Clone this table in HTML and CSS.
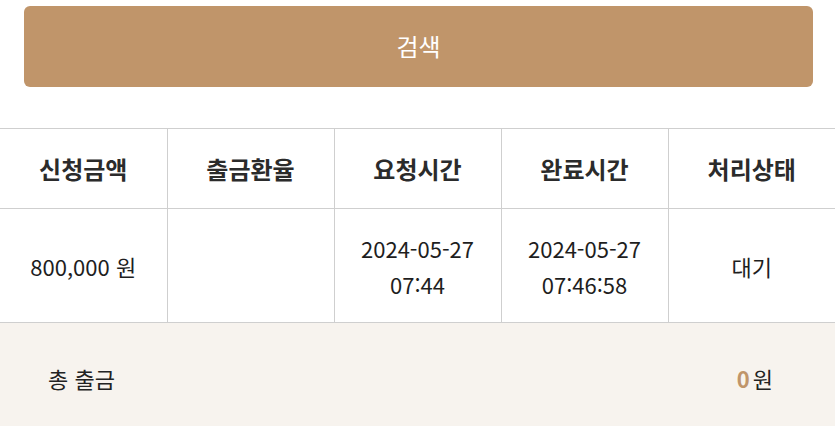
FILE: index.html
```html
<!DOCTYPE html>
<html lang="ko">
<head>
<meta charset="utf-8">
<link rel="stylesheet" href="styles.css">
</head>
<body>
<div class="page">
  <div class="search-wrap">
    <button class="search-btn">검색</button>
  </div>
  <table class="list">
    <thead>
      <tr>
        <th>신청금액</th>
        <th>출금환율</th>
        <th>요청시간</th>
        <th>완료시간</th>
        <th>처리상태</th>
      </tr>
    </thead>
    <tbody>
      <tr>
        <td>800,000 원</td>
        <td></td>
        <td>2024-05-27<br>07:44</td>
        <td>2024-05-27<br>07:46:58</td>
        <td>대기</td>
      </tr>
    </tbody>
  </table>
  <div class="total">
    <span class="total-label">총 출금</span>
    <span class="total-value"><span class="amount">0</span>원</span>
  </div>
</div>
</body>
</html>
```
FILE: styles.css
```css
html, body {
  margin: 0;
  padding: 0;
  background: #fff;
}
body {
  font-family: "Noto Sans CJK KR", "Noto Sans", sans-serif;
  color: #222;
}
.page {
  width: 835px;
  height: 426px;
  overflow: hidden;
  display: flex;
  flex-direction: column;
}
.search-wrap {
  padding: 6px 22px 0 24px;
}
.search-btn {
  display: block;
  width: 100%;
  height: 81px;
  border: none;
  border-radius: 6px;
  background: #c0956a;
  color: #fff;
  font-family: inherit;
  font-size: 24px;
  padding: 0 0 2px;
}
.list {
  margin-top: 41px;
  width: 100%;
  border-collapse: collapse;
  table-layout: fixed;
}
.list th, .list td {
  border: 1px solid #cfcfcf;
  text-align: center;
  padding: 0;
}
.list tr > :first-child { border-left: none; }
.list tr > :last-child { border-right: none; }
.list th {
  height: 79px;
  font-size: 24px;
  font-weight: 700;
  color: #2b2b2b;
}
.list td {
  height: 113px;
  font-size: 22px;
  line-height: 36px;
  color: #1e1e1e;
}
.total {
  flex: 1;
  background: #f7f3ee;
  display: flex;
  justify-content: space-between;
  align-items: center;
  padding: 6px 62px 0 48px;
  font-size: 22px;
  color: #222;
}
.amount {
  color: #c0956a;
  font-weight: 700;
  margin-right: 3px;
}
```
